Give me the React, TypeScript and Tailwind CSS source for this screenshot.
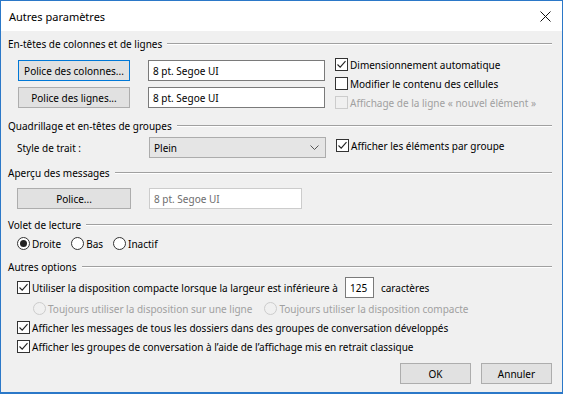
import React from 'react';

const Section = ({ title }: { title: string }) => (
  <div className="flex items-center h-4">
    <span className="whitespace-nowrap">{title}</span>
    <div className="ml-[5px] flex-1 h-[2px] border-t border-[#a0a0a0] border-b border-b-white" />
  </div>
);

const Check = ({ checked = false, disabled = false }: { checked?: boolean; disabled?: boolean }) => (
  <span
    className={`w-[13px] h-[13px] border shrink-0 flex items-center justify-center ${
      disabled ? 'border-[#cccccc] bg-[#f0f0f0]' : 'border-[#333333] bg-white'
    }`}
  >
    {checked && (
      <svg width="11" height="11" viewBox="0 0 11 11">
        <path d="M1.5 5.5 L4.2 8.2 L9.5 2.2" stroke="#222222" fill="none" strokeWidth="1.1" />
      </svg>
    )}
  </span>
);

const Radio = ({ selected = false, disabled = false }: { selected?: boolean; disabled?: boolean }) => (
  <span
    className={`w-[13px] h-[13px] rounded-full border shrink-0 flex items-center justify-center ${
      disabled ? 'border-[#cccccc] bg-[#f0f0f0]' : 'border-[#333333] bg-white'
    }`}
  >
    {selected && <span className="w-[7px] h-[7px] rounded-full bg-[#222222]" />}
  </span>
);

const Button = ({ label, focused = false, className = '' }: { label: string; focused?: boolean; className?: string }) => (
  <div
    className={`h-[21px] flex items-center justify-center bg-[#e1e1e1] border whitespace-nowrap ${
      focused ? 'border-[#0078d7]' : 'border-[#adadad]'
    } ${className}`}
  >
    {label}
  </div>
);

const Field = ({ value, disabled = false, className = '' }: { value: string; disabled?: boolean; className?: string }) => (
  <div
    className={`h-[21px] flex items-center px-[4px] bg-white border ${
      disabled ? 'border-[#cccccc] text-[#6d6d6d]' : 'border-[#7a7a7a]'
    } ${className}`}
  >
    {value}
  </div>
);

export default function App() {
  return (
    <div className="w-[563px] h-[394px] border border-[#2b78c8] border-b-[2px] bg-[#f0f0f0] flex flex-col text-[10px] leading-none text-black font-['Segoe_UI','Noto_Sans',sans-serif] overflow-hidden whitespace-nowrap">
      {/* title bar */}
      <div className="h-[30px] bg-white flex items-center justify-between pl-[8px] pr-[11px] shrink-0 text-[11px]">
        <span>Autres paramètres</span>
        <svg width="11" height="11" viewBox="0 0 11 11">
          <path d="M0.5 0.5 L10.5 10.5 M10.5 0.5 L0.5 10.5" stroke="#111111" strokeWidth="1" />
        </svg>
      </div>

      <div className="pl-[7px] pr-[10px] flex flex-col">
        <div className="mt-[5px]">
          <Section title="En-têtes de colonnes et de lignes" />
        </div>
        <div className="flex items-start">
          <div className="mt-[8px] ml-[10px] flex flex-col gap-[6px]">
            <div className="flex">
              <Button label="Police des colonnes..." focused className="w-[112px]" />
              <Field value="8 pt. Segoe UI" className="ml-[18px] w-[177px]" />
            </div>
            <div className="flex">
              <Button label="Police des lignes..." className="w-[112px]" />
              <Field value="8 pt. Segoe UI" className="ml-[18px] w-[177px]" />
            </div>
          </div>
          <div className="mt-[3px] ml-[10px] flex flex-col">
            <div className="h-[19px] flex items-center gap-[2px]">
              <Check checked />
              <span>Dimensionnement automatique</span>
            </div>
            <div className="h-[19px] flex items-center gap-[2px]">
              <Check />
              <span>Modifier le contenu des cellules</span>
            </div>
            <div className="h-[19px] flex items-center gap-[2px] text-[#a0a0a0]">
              <Check disabled />
              <span>Affichage de la ligne « nouvel élément »</span>
            </div>
          </div>
        </div>

        <div className="mt-[6px]">
          <Section title="Quadrillage et en-têtes de groupes" />
        </div>
        <div className="flex items-start">
          <div className="mt-[3px] ml-[9px] w-[132px] h-[21px] flex items-center">Style de trait :</div>
          <div className="mt-[3px] w-[177px] h-[21px] bg-[#e5e5e5] border border-[#acacac] flex items-center justify-between pl-[4px] pr-[6px]">
            <span>Plein</span>
            <svg width="9" height="5" viewBox="0 0 9 5">
              <path d="M0.5 0.5 L4.5 4.5 L8.5 0.5" stroke="#555555" fill="none" strokeWidth="1" />
            </svg>
          </div>
          <div className="mt-[2px] ml-[10px] h-[19px] flex items-center gap-[2px]">
            <Check checked />
            <span>Afficher les éléments par groupe</span>
          </div>
        </div>

        <div className="mt-[7px]">
          <Section title="Aperçu des messages" />
        </div>
        <div className="flex mt-[7px] ml-[9px]">
          <Button label="Police..." className="w-[114px]" />
          <Field value="8 pt. Segoe UI" disabled className="ml-[18px] w-[153px]" />
        </div>

        <div className="mt-[8px]">
          <Section title="Volet de lecture" />
        </div>
        <div className="mt-[1px] ml-[9px] h-[19px] flex items-center">
          <Radio selected />
          <span className="ml-[2px]">Droite</span>
          <span className="ml-[10px]"><Radio /></span>
          <span className="ml-[2px]">Bas</span>
          <span className="ml-[10px]"><Radio /></span>
          <span className="ml-[2px]">Inactif</span>
        </div>

        <div className="mt-[6px]">
          <Section title="Autres options" />
        </div>
        <div className="mt-[2px] ml-[9px] h-[21px] flex items-center">
          <Check checked />
          <span className="ml-[2px]">Utiliser la disposition compacte lorsque la largeur est inférieure à</span>
          <div className="ml-[7px] w-[29px] h-[21px] bg-white border border-[#7a7a7a] flex items-center pl-[4px]">125</div>
          <span className="ml-[7px]">caractères</span>
        </div>
        <div className="mt-[1px] ml-[25px] h-[19px] flex items-center text-[#a0a0a0]">
          <Radio disabled />
          <span className="ml-[2px]">Toujours utiliser la disposition sur une ligne</span>
          <span className="ml-[12px]"><Radio disabled /></span>
          <span className="ml-[2px]">Toujours utiliser la disposition compacte</span>
        </div>
        <div className="ml-[9px] h-[19px] flex items-center">
          <Check checked />
          <span className="ml-[2px]">Afficher les messages de tous les dossiers dans des groupes de conversation développés</span>
        </div>
        <div className="ml-[9px] h-[19px] flex items-center">
          <Check checked />
          <span className="ml-[2px]">Afficher les groupes de conversation à l’aide de l’affichage mis en retrait classique</span>
        </div>

        <div className="mt-[7px] flex justify-end gap-[10px]">
          <Button label="OK" className="w-[71px]" />
          <Button label="Annuler" className="w-[71px]" />
        </div>
      </div>
    </div>
  );
}
